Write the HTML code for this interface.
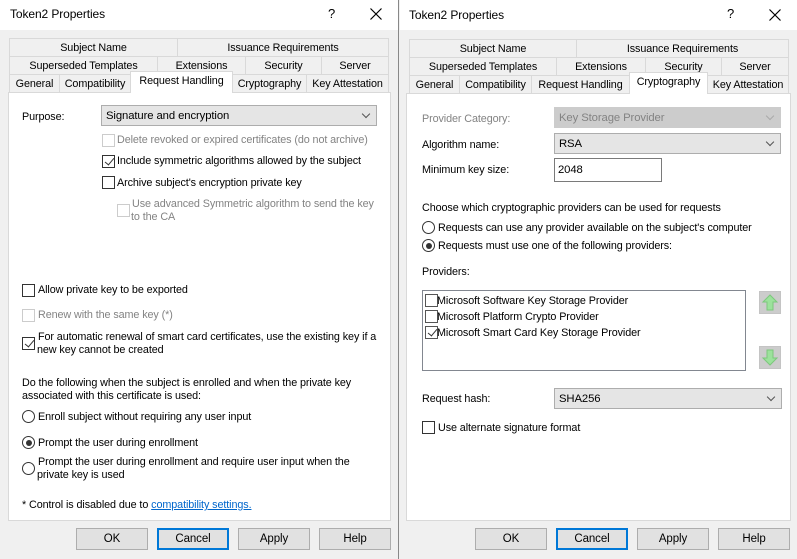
<!DOCTYPE html>
<html><head><meta charset="utf-8"><style>
*{margin:0;padding:0;box-sizing:border-box}
body{width:797px;height:559px;overflow:hidden;background:#f0f0f0;font-family:"Liberation Sans",sans-serif;font-size:10.8px;color:#000;position:relative;letter-spacing:-0.1px}
.a{position:absolute;white-space:nowrap;line-height:13px;margin-top:2px}
.win{position:absolute;top:0;height:559px;background:#f0f0f0}
.title{position:absolute;left:0;right:0;top:0;height:30px;background:#fff}
.tab{position:absolute;height:19px;border:1px solid #d9d9d9;background:#f0f0f0;text-align:center;line-height:18px;white-space:nowrap}
.tab.sel{background:#fff;border-bottom:none;height:22px;line-height:19px;z-index:2}
.panel{position:absolute;background:#fff;border:1px solid #d9d9d9}
.btn{position:absolute;height:22px;width:72px;background:#e1e1e1;border:1px solid #adadad;text-align:center;line-height:21px;font-size:11.5px}
.btn.def{border:2px solid #0078d7;line-height:19px}
.cb{position:absolute;width:13px;height:13px;border:1px solid #333;background:#fff;margin-top:1px}
.cb.dis{border-color:#ccc}
.cb.chk::after{content:"";position:absolute;left:3.5px;top:0px;width:4px;height:8px;border:solid #333;border-width:0 1px 1px 0;transform:rotate(40deg)}
.rb{position:absolute;width:13px;height:13px;border:1px solid #333;border-radius:50%;background:#fff;margin-top:1px}
.rb.on::after{content:"";position:absolute;left:2.5px;top:2.5px;width:6px;height:6px;border-radius:50%;background:#333}
.combo{position:absolute;height:21px;background:#e5e5e5;border:1px solid #adadad;padding-left:4px;line-height:20px;font-size:11.3px}
.combo::after{content:"";position:absolute;right:7px;top:5px;width:5px;height:5px;border:solid #555;border-width:0 1px 1px 0;transform:rotate(45deg)}
.combo.dis{background:#ccc;border-color:#ccc;color:#838383}
.combo.dis::after{border-color:#aaa}
.g{color:#838383}
.x{position:absolute;top:8px}
</style></head><body>

<!-- LEFT WINDOW -->
<div class="win" style="left:0;width:399px;border-right:1px solid #888">
<div class="title"></div>
<div class="a" style="left:10px;top:6px;font-size:12px">Token2 Properties</div>
<div class="a" style="left:328px;top:5px;font-size:13px">?</div>
<svg class="x" style="left:370px" width="12" height="12"><path d="M0.5 0.5L11.5 11.5M11.5 0.5L0.5 11.5" stroke="#000" stroke-width="1.2"/></svg>

<div class="tab" style="left:9px;top:38px;width:169px">Subject Name</div>
<div class="tab" style="left:177px;top:38px;width:212px">Issuance Requirements</div>
<div class="tab" style="left:9px;top:56px;width:149px">Superseded Templates</div>
<div class="tab" style="left:157px;top:56px;width:89px">Extensions</div>
<div class="tab" style="left:245px;top:56px;width:77px">Security</div>
<div class="tab" style="left:321px;top:56px;width:68px">Server</div>
<div class="tab" style="left:9px;top:74px;width:51px">General</div>
<div class="tab" style="left:59px;top:74px;width:72px">Compatibility</div>
<div class="tab sel" style="left:130px;top:71px;width:103px">Request Handling</div>
<div class="tab" style="left:232px;top:74px;width:75px">Cryptography</div>
<div class="tab" style="left:306px;top:74px;width:83px">Key Attestation</div>
<div class="panel" style="left:8px;top:92px;width:383px;height:429px"></div>

<div class="a" style="left:22px;top:109px">Purpose:</div>
<div class="combo" style="left:101px;top:105px;width:276px">Signature and encryption</div>
<div class="cb dis" style="left:102px;top:133px"></div><div class="a g" style="left:117px;top:132px">Delete revoked or expired certificates (do not archive)</div>
<div class="cb chk" style="left:102px;top:154px"></div><div class="a" style="left:117px;top:153px">Include symmetric algorithms allowed by the subject</div>
<div class="cb" style="left:102px;top:175px"></div><div class="a" style="left:117px;top:175px">Archive subject's encryption private key</div>
<div class="cb dis" style="left:117px;top:203px"></div><div class="a g" style="left:132px;top:196px">Use advanced Symmetric algorithm to send the key</div><div class="a g" style="left:131px;top:209px">to the CA</div>
<div class="cb" style="left:22px;top:283px"></div><div class="a" style="left:38px;top:282px">Allow private key to be exported</div>
<div class="cb dis" style="left:22px;top:308px"></div><div class="a g" style="left:38px;top:307px">Renew with the same key (*)</div>
<div class="cb chk" style="left:22px;top:336px"></div><div class="a" style="left:38px;top:329px">For automatic renewal of smart card certificates, use the existing key if a</div><div class="a" style="left:37px;top:342px">new key cannot be created</div>
<div class="a" style="left:22px;top:375px">Do the following when the subject is enrolled and when the private key</div>
<div class="a" style="left:22px;top:388px">associated with this certificate is used:</div>
<div class="rb" style="left:22px;top:409px"></div><div class="a" style="left:38px;top:409px">Enroll subject without requiring any user input</div>
<div class="rb on" style="left:22px;top:435px"></div><div class="a" style="left:38px;top:435px">Prompt the user during enrollment</div>
<div class="rb" style="left:22px;top:461px"></div><div class="a" style="left:38px;top:454px">Prompt the user during enrollment and require user input when the</div><div class="a" style="left:37px;top:467px">private key is used</div>
<div class="a" style="left:22px;top:497px">* Control is disabled due to <span style="color:#0066cc;text-decoration:underline">compatibility settings.</span></div>

<div class="btn" style="left:76px;top:528px">OK</div>
<div class="btn def" style="left:157px;top:528px">Cancel</div>
<div class="btn" style="left:238px;top:528px">Apply</div>
<div class="btn" style="left:319px;top:528px">Help</div>
</div>

<!-- RIGHT WINDOW -->
<div class="win" style="left:400px;width:397px">
<div class="title"></div>
<div class="a" style="left:9px;top:7px;font-size:12px">Token2 Properties</div>
<div class="a" style="left:327px;top:5px;font-size:13px">?</div>
<svg class="x" style="left:369px;top:9px" width="12" height="12"><path d="M0.5 0.5L11.5 11.5M11.5 0.5L0.5 11.5" stroke="#000" stroke-width="1.2"/></svg>

<div class="tab" style="left:9px;top:39px;width:168px">Subject Name</div>
<div class="tab" style="left:176px;top:39px;width:213px">Issuance Requirements</div>
<div class="tab" style="left:9px;top:57px;width:148px">Superseded Templates</div>
<div class="tab" style="left:156px;top:57px;width:90px">Extensions</div>
<div class="tab" style="left:245px;top:57px;width:77px">Security</div>
<div class="tab" style="left:321px;top:57px;width:68px">Server</div>
<div class="tab" style="left:9px;top:75px;width:51px">General</div>
<div class="tab" style="left:59px;top:75px;width:73px">Compatibility</div>
<div class="tab" style="left:131px;top:75px;width:99px">Request Handling</div>
<div class="tab sel" style="left:229px;top:72px;width:79px">Cryptography</div>
<div class="tab" style="left:307px;top:75px;width:82px">Key Attestation</div>
<div class="panel" style="left:6px;top:93px;width:385px;height:428px"></div>

<div class="a g" style="left:22px;top:111px">Provider Category:</div>
<div class="combo dis" style="left:154px;top:107px;width:227px">Key Storage Provider</div>
<div class="a" style="left:22px;top:137px">Algorithm name:</div>
<div class="combo" style="left:154px;top:133px;width:227px">RSA</div>
<div class="a" style="left:22px;top:162px">Minimum key size:</div>
<div style="position:absolute;left:154px;top:158px;width:108px;height:24px;background:#fff;border:1px solid #7a7a7a;padding-left:3px;line-height:22px;font-size:11.3px">2048</div>
<div class="a" style="left:22px;top:200px">Choose which cryptographic providers can be used for requests</div>
<div class="rb" style="left:22px;top:220px"></div><div class="a" style="left:38px;top:220px">Requests can use any provider available on the subject's computer</div>
<div class="rb on" style="left:22px;top:238px"></div><div class="a" style="left:38px;top:238px">Requests must use one of the following providers:</div>
<div class="a" style="left:22px;top:264px">Providers:</div>
<div style="position:absolute;left:22px;top:290px;width:324px;height:81px;background:#fff;border:1px solid #828790"></div>
<div class="cb" style="left:25px;top:293px;border-color:#555"></div><div class="a" style="left:37px;top:293px">Microsoft Software Key Storage Provider</div>
<div class="cb" style="left:25px;top:309px;border-color:#555"></div><div class="a" style="left:37px;top:309px">Microsoft Platform Crypto Provider</div>
<div class="cb chk" style="left:25px;top:325px;border-color:#555"></div><div class="a" style="left:37px;top:325px">Microsoft Smart Card Key Storage Provider</div>
<div style="position:absolute;left:359px;top:291px;width:22px;height:23px;background:#ccc;border:1px solid #c4c4c4">
<svg width="20" height="21" viewBox="0 0 20 21"><path d="M10 3 L17 10 L13 10 L13 18 L7 18 L7 10 L3 10 Z" fill="#9ce29c" stroke="#7cc87c"/></svg></div>
<div style="position:absolute;left:359px;top:346px;width:22px;height:23px;background:#ccc;border:1px solid #c4c4c4">
<svg width="20" height="21" viewBox="0 0 20 21"><path d="M10 18 L17 11 L13 11 L13 3 L7 3 L7 11 L3 11 Z" fill="#9ce29c" stroke="#7cc87c"/></svg></div>
<div class="a" style="left:22px;top:391px">Request hash:</div>
<div class="combo" style="left:154px;top:388px;width:228px">SHA256</div>
<div class="cb" style="left:22px;top:420px"></div><div class="a" style="left:38px;top:420px">Use alternate signature format</div>

<div class="btn" style="left:75px;top:528px">OK</div>
<div class="btn def" style="left:156px;top:528px">Cancel</div>
<div class="btn" style="left:237px;top:528px">Apply</div>
<div class="btn" style="left:318px;top:528px">Help</div>
</div>
</body></html>
